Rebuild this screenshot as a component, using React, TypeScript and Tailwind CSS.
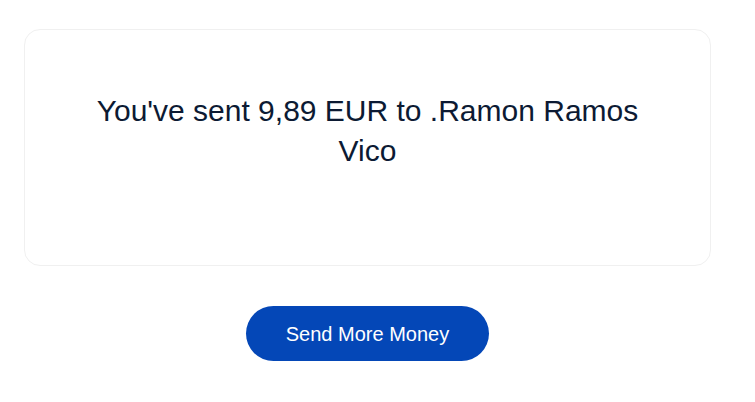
export default function App() {
  return (
    <div className="min-h-[402px] w-full bg-white" style={{ fontFamily: '"Liberation Sans", Arial, sans-serif' }}>
      <div className="w-[735px] px-[24px] pt-[29px]">
        <div className="rounded-[16px] border border-[#f0f0f0] px-[60px] pt-[61px] pb-[94px] text-center">
          <p className="text-[30px] leading-[40px] text-[#0c1a33]">You've sent 9,89 EUR to .Ramon Ramos Vico</p>
        </div>
        <div className="mt-[40px] flex justify-center">
          <button className="h-[55px] w-[243px] rounded-full bg-[#0447b7] text-[20px] text-white">Send More Money</button>
        </div>
      </div>
    </div>
  );
}
